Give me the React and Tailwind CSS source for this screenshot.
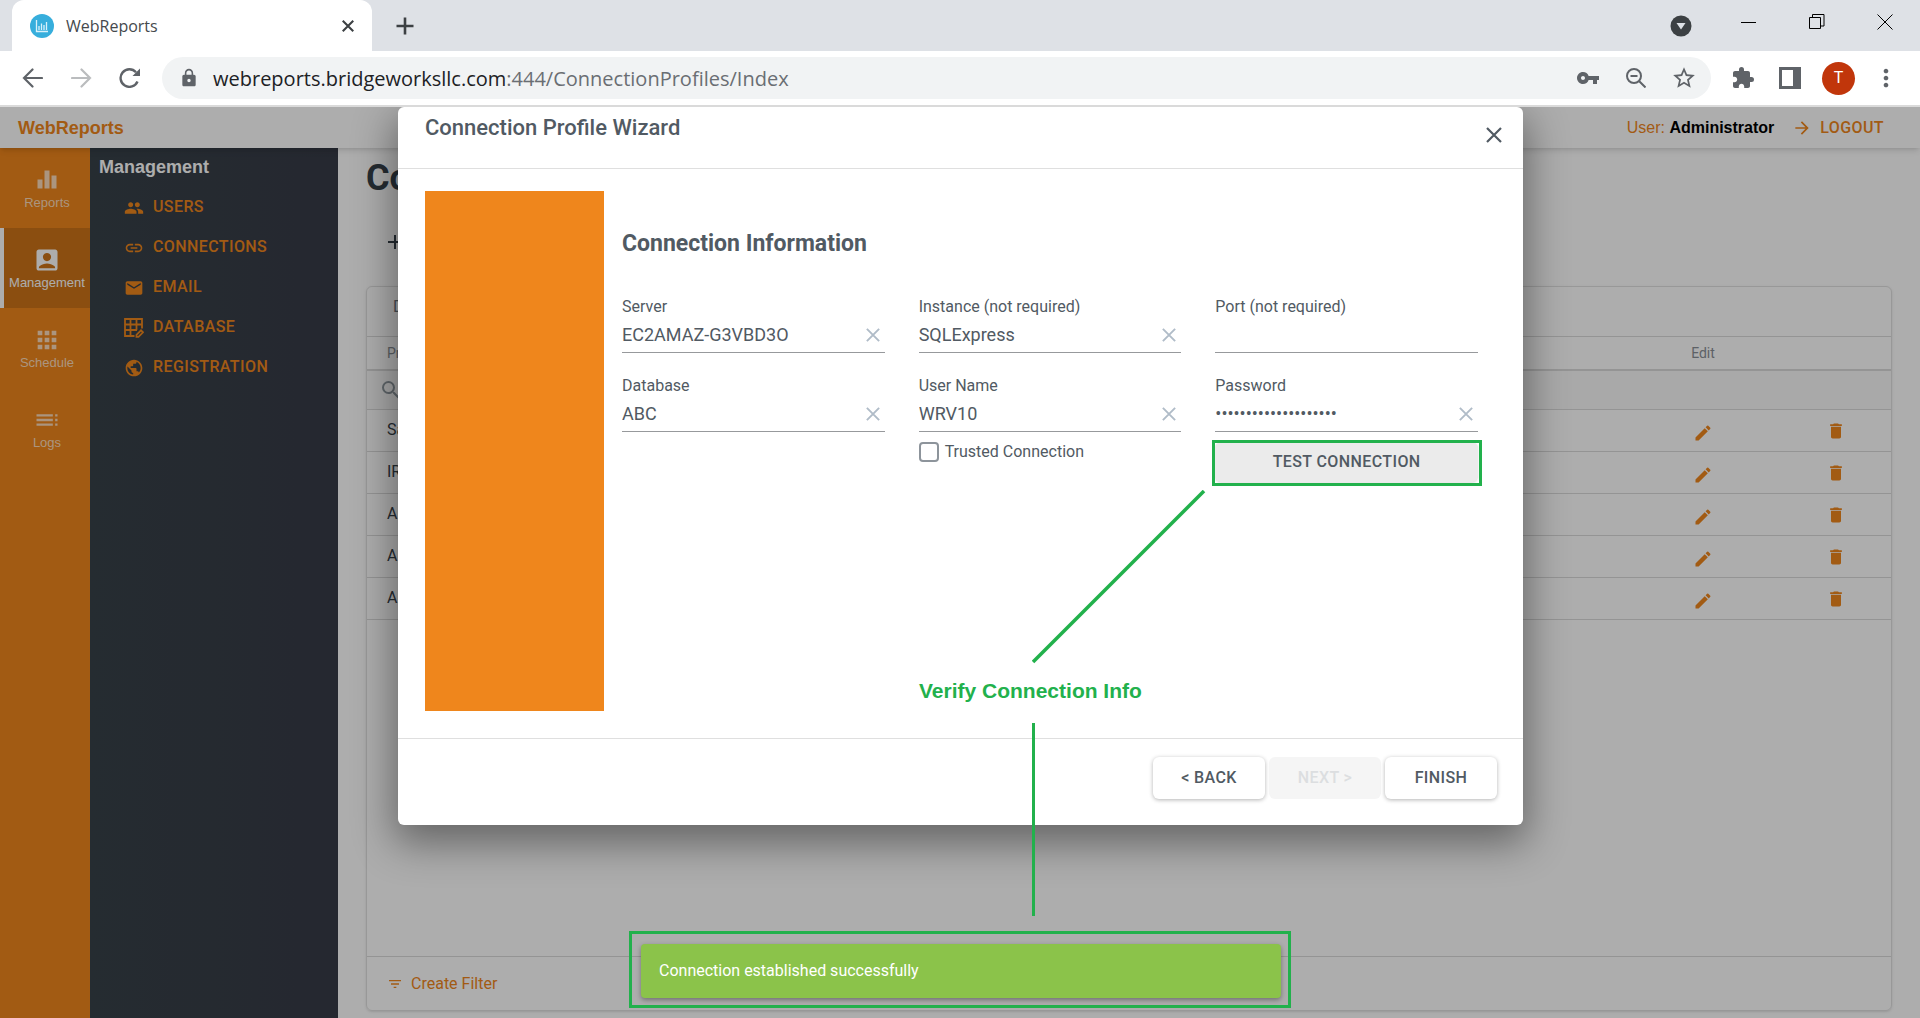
import React from "react";
import {
  MdArrowForward, MdLock, MdVpnKey, MdStarOutline, MdExtension,
  MdMoreVert, MdAdd, MdPeople, MdLink, MdEmail, MdPublic, MdAccountBox, MdApps, MdToc,
  MdSearch, MdEdit, MdDelete, MdFilterList,
} from "react-icons/md";

const RAIL = [
  { label: "Reports", icon: (
    <svg viewBox="0 0 28 28" className="size-7" fill="currentColor"><path d="M11.500 4.500h5v18h-5zM4.500 13.500h5v9h-5zM18.500 9.500h5v13h-5z" /></svg>
  ) },
  { label: "Management", icon: <MdAccountBox className="size-7" />, active: true },
  { label: "Schedule", icon: <MdApps className="size-7" /> },
  { label: "Logs", icon: <MdToc className="size-7" /> },
];

function DatabaseIcon() {
  return (
    <svg viewBox="0 0 20 20" className="size-5" fill="none" stroke="currentColor" strokeWidth="1.800">
      <path d="M10.500 18H1V1h17v9.500M1 6.500h17M1 12h12M6.500 1v17M12.500 1v11" />
      <path d="M12.500 18.800v-2l4.500-4.500 2 2-4.500 4.500z" />
    </svg>
  );
}

function Cross({ className, width }) {
  return (
    <svg viewBox="0 0 16 16" className={className} fill="none" stroke="currentColor" strokeWidth={width}>
      <path d="M1 1l14 14M15 1L1 15" />
    </svg>
  );
}

const MENU = [
  { label: "USERS", icon: <MdPeople className="size-5" /> },
  { label: "CONNECTIONS", icon: <MdLink className="size-5" /> },
  { label: "EMAIL", icon: <MdEmail className="size-5" /> },
  { label: "DATABASE", icon: <DatabaseIcon /> },
  { label: "REGISTRATION", icon: <MdPublic className="size-5" /> },
];

const ROWS = ["Sample", "IRIS", "ABC", "ABC Test", "ABC Dev"];

function Browser() {
  return (
    <header className="shrink-0 font-['Open_Sans','Noto_Sans',sans-serif]">
      <div className="flex h-[51px] items-stretch bg-[#dee1e6] pl-3">
        <div className="flex w-[360px] items-center rounded-t-xl bg-white pr-[18px] pl-[18px]">
          <svg viewBox="0 0 24 24" className="size-6">
            <circle cx="12" cy="12" r="12" fill="#37aedc" />
            <path d="M6.500 6v11.500h11.500M9 16v-4M11.500 16V9.500M14 16v-5M16.500 16V8" fill="none" stroke="#d9f1fa" strokeWidth="1.300" />
          </svg>
          <span className="ml-3 grow text-base text-[#45494d]">WebReports</span>
          <button aria-label="Close tab" className="text-[#3c4043]"><Cross className="size-3" width="2.800" /></button>
        </div>
        <button aria-label="New tab" className="ml-6 text-[#3c4043]">
          <svg viewBox="0 0 18 18" className="size-[18px]" stroke="currentColor" strokeWidth="2.600"><path d="M9 .5v17M.5 9h17" /></svg>
        </button>
        <div className="grow" />
        <button aria-label="Search tabs" className="mr-[49px] text-[#3c4043]">
          <svg viewBox="0 0 22 22" className="size-[22px]"><circle cx="11" cy="11" r="10.500" fill="currentColor" /><path d="M6.500 8h9L11 14.500z" fill="#dee1e6" /></svg>
        </button>
        <div className="flex items-center gap-[52px] pr-[27px] pb-2 text-black">
          <button aria-label="Minimize"><svg viewBox="0 0 16 16" className="size-4" stroke="currentColor"><path d="M0 8.500h15" /></svg></button>
          <button aria-label="Restore"><svg viewBox="0 0 16 16" className="size-4" fill="none" stroke="currentColor"><path d="M.5 3.500h11v11H.5zM3.500 3V.5h11.500v11.500h-3" /></svg></button>
          <button aria-label="Close"><svg viewBox="0 0 16 16" className="size-4" stroke="currentColor"><path d="M.5.5l15 15M15.500.5l-15 15" /></svg></button>
        </div>
      </div>
      <div className="flex h-14 items-center border-b-2 border-[#dadada] bg-white pr-5 pl-[22px] text-[#5f6368]">
        <button aria-label="Back">
          <svg viewBox="0 0 21 20" className="h-5 w-[21px]" fill="none" stroke="currentColor" strokeWidth="2.200" strokeLinecap="round"><path d="M20 10H2M10.500 1.500L2 10l8.500 8.500" /></svg>
        </button>
        <button aria-label="Forward" className="ml-7 text-[#babcbe]">
          <svg viewBox="0 0 21 20" className="h-5 w-[21px]" fill="none" stroke="currentColor" strokeWidth="2.200" strokeLinecap="round"><path d="M1 10h18M10.500 1.500L19 10l-8.500 8.500" /></svg>
        </button>
        <button aria-label="Reload" className="ml-[27px]">
          <svg viewBox="0 0 22 20" className="h-5 w-[22px]" fill="none" stroke="currentColor" strokeWidth="2.400"><path d="M18.500 13.500a8.800 8.800 0 1 1-1.500-9.300" /><path d="M21 .5V8h-7.500z" fill="currentColor" stroke="none" /></svg>
        </button>
        <div className="ml-[21px] flex h-[42px] grow items-center rounded-full bg-[#f1f3f4] pr-[14px] pl-[17px]">
          <MdLock className="size-5" />
          <span className="ml-[14px] grow pt-px text-xl text-[#6a6e73]"><span className="text-[#202124]">webreports.bridgeworksllc.com</span>:444/ConnectionProfiles/Index</span>
          <button aria-label="Passwords"><MdVpnKey className="size-6" /></button>
          <button aria-label="Zoom" className="ml-[26px]">
            <svg viewBox="0 0 20 20" className="size-5" fill="none" stroke="currentColor" strokeWidth="2"><circle cx="8" cy="8" r="7" /><path d="M13 13l6.500 6.500M4.500 8h7" /></svg>
          </button>
          <button aria-label="Bookmark" className="ml-[25px]"><MdStarOutline className="size-[26px]" /></button>
        </div>
        <button aria-label="Extensions" className="ml-5"><MdExtension className="size-6" /></button>
        <button aria-label="Side panel" className="ml-6"><svg viewBox="0 0 22 22" className="size-[22px]"><path d="M0 0h22v22H0zM3 3v16h11V3z" fill="currentColor" fillRule="evenodd" /></svg></button>
        <button aria-label="Profile" className="ml-[21px] size-[33px] rounded-full bg-[#c1360b] font-['Roboto',sans-serif] text-base text-white">T</button>
        <button aria-label="Menu" className="ml-[17px]"><MdMoreVert className="size-7" /></button>
      </div>
    </header>
  );
}

function Field({ id, label, value, type = "text" }) {
  return (
    <div className="flex flex-col">
      <label htmlFor={id} className="text-base leading-5">{label}</label>
      <div className="flex h-9 items-center border-b border-[#97999c]">
        <input id={id} type={type} defaultValue={value} className="w-full min-w-0 grow bg-transparent pt-px text-lg outline-none" />
        {value && <button type="button" aria-label={"Clear " + label} className="pr-[5px] text-[#b0bcc8]"><Cross className="size-[14px]" width="2.200" /></button>}
      </div>
    </div>
  );
}

function Wizard() {
  return (
    <div role="dialog" aria-label="Connection Profile Wizard" className="absolute top-0 left-[398px] flex w-[1125px] flex-col rounded-md bg-white text-[#515a63] shadow-[0_14px_40px_4px_rgba(0,0,0,0.42)]">
      <div className="flex h-[62px] items-start justify-between border-b border-[#dfdfdf] pt-2 pr-[21px] pl-[27px]">
        <h2 className="text-[22px] leading-[26px] font-medium">Connection Profile Wizard</h2>
        <button aria-label="Close" className="mt-3"><Cross className="size-4" width="2.200" /></button>
      </div>
      <div className="flex gap-[18px] px-[27px] pt-[22px] pb-[27px]">
        <div className="w-[179px] bg-[#ef861c]" />
        <form className="h-[520px] grow pt-[41px] pr-[18px]">
          <h3 className="text-[23px] leading-6 font-bold">Connection Information</h3>
          <div className="mt-[41px] grid grid-cols-3 gap-x-[34px] gap-y-[23px]">
            <Field id="server" label="Server" value="EC2AMAZ-G3VBD3O" />
            <Field id="instance" label="Instance (not required)" value="SQLExpress" />
            <Field id="port" label="Port (not required)" value="" />
            <Field id="database" label="Database" value="ABC" />
            <Field id="user" label="User Name" value="WRV10" />
            <Field id="password" label="Password" type="password" value="12345678901234567890" />
          </div>
          <div className="mt-[10px] grid grid-cols-3 gap-x-[34px]">
            <label className="col-start-2 flex items-center gap-[6px] self-start text-base leading-5">
              <input type="checkbox" className="size-5 appearance-none rounded-sm border-2 border-[#8d949b]" />
              Trusted Connection
            </label>
            <button type="button" className="h-10 rounded-md bg-[#ebebeb] text-base font-medium tracking-wide shadow">TEST CONNECTION</button>
          </div>
        </form>
      </div>
      <div className="flex justify-end gap-1 border-t border-[#dfdfdf] pt-[18px] pr-[26px] pb-[26px] text-base font-medium tracking-wide">
        <button className="h-[42px] w-[112px] rounded-md shadow-[0_1px_4px_rgba(0,0,0,0.3)]">&lt; BACK</button>
        <button disabled className="h-[42px] w-[112px] rounded-md bg-[#f5f5f5] text-[#dcdee0]">NEXT &gt;</button>
        <button className="h-[42px] w-[112px] rounded-md shadow-[0_1px_4px_rgba(0,0,0,0.3)]">FINISH</button>
      </div>
    </div>
  );
}

function Annotations() {
  return (
    <>
      <div className="pointer-events-none absolute top-[333px] left-[1212px] h-[46px] w-[270px] border-[3px] border-[#22b14c]" />
      <svg viewBox="0 0 174 174" className="absolute top-[383px] left-[1032px] size-[174px]" stroke="#22b14c" strokeWidth="3.500"><path d="M1 172L172 1" /></svg>
      <p className="absolute top-[572px] left-[919px] font-['Liberation_Sans',sans-serif] text-[21px] leading-6 font-bold whitespace-nowrap text-[#22b14c]">Verify Connection Info</p>
      <div className="absolute top-[616px] left-[1032px] h-[193px] w-[3px] bg-[#22b14c]" />
      <div className="absolute top-[824px] left-[629px] border-[3px] border-[#22b14c] pt-[10px] pr-[7px] pb-[7px] pl-[9px]">
        <div role="status" className="h-[54px] w-[640px] rounded bg-[#8bc34a] px-[18px] text-base leading-[54px] text-white shadow-[0_2px_5px_rgba(0,0,0,0.35)]">Connection established successfully</div>
      </div>
    </>
  );
}

export default function App() {
  return (
    <div className="flex min-h-screen flex-col bg-white font-['Roboto',sans-serif]">
      <Browser />
      <div className="relative flex grow flex-col overflow-hidden">
        <div className="z-10 flex h-[41px] items-center bg-white pr-9 pl-[18px] font-['Liberation_Sans',sans-serif] text-base text-[#ef861c] shadow-md">
          <span className="grow text-lg font-bold">WebReports</span>
          <span>User: <b className="text-black">Administrator</b></span>
          <a href="#" className="ml-[18px] flex items-center gap-2 font-['Roboto',sans-serif] font-medium tracking-wide"><MdArrowForward className="size-5" />LOGOUT</a>
        </div>
        <div className="flex grow">
          <nav className="w-[90px] shrink-0 bg-[#ef861c] font-['Liberation_Sans',sans-serif] text-[13px] leading-[18px]">
            {RAIL.map((r) => (
              <a key={r.label} href="#" className={r.active ? "flex h-20 flex-col items-center border-l-4 border-white bg-[#cd7418] pt-[18px] text-white" : "flex h-20 flex-col items-center border-l-4 border-transparent pt-[18px] text-[#fcdcbc]"}>
                {r.icon}{r.label}
              </a>
            ))}
          </nav>
          <nav className="w-[248px] shrink-0 bg-linear-to-r from-[#374149] to-[#373b47] px-[9px] pt-1">
            <h1 className="mt-[3px] font-['Liberation_Sans',sans-serif] text-lg leading-6 font-bold text-white">Management</h1>
            <ul className="mt-2 text-base font-medium tracking-wide text-[#ef861c]">
              {MENU.map((m) => (
                <li key={m.label}><a href="#" className="flex h-10 items-center pl-[25px]"><span className="flex w-[29px] justify-start pt-px">{m.icon}</span>{m.label}</a></li>
              ))}
            </ul>
          </nav>
          <main className="flex min-w-0 grow flex-col bg-white pt-2 pr-[28px] pb-[7px] pl-[28px] text-[#37414b]">
            <h1 className="text-4xl leading-[44px] font-bold">Connection Profiles</h1>
            <button aria-label="Add" className="mt-[30px] ml-[17px] self-start"><MdAdd className="size-6" /></button>
            <section className="mt-8 flex grow flex-col rounded-md border border-[#e0e0e0] shadow">
              <div className="h-[49px] pt-2 pl-[26px] text-base text-[#6c757d]">Drag a column header here</div>
              <table className="w-full table-fixed border-t border-[#dadada] text-base">
                <thead>
                  <tr className="h-[33px] border-b-2 border-[#dadada] text-sm text-[#8a9097]">
                    <th className="pl-5 text-left font-normal">Profile</th>
                    <th className="w-[156px] font-normal">Edit</th>
                    <th className="w-[110px]" />
                  </tr>
                  <tr className="h-10 border-b border-[#dadada] bg-[#fafafa]">
                    <td className="pl-3"><MdSearch className="size-6 text-[#8f999f]" /></td><td /><td />
                  </tr>
                </thead>
                <tbody>
                  {ROWS.map((r) => (
                    <tr key={r} className="h-[42px] border-b border-[#dadada]">
                      <td className="pb-px pl-5">{r}</td>
                      <td><button aria-label={"Edit " + r} className="mx-auto block pt-1 text-[#ef861c]"><MdEdit className="size-5" /></button></td>
                      <td><button aria-label={"Delete " + r} className="mx-auto block text-[#ef861c]"><MdDelete className="size-5" /></button></td>
                    </tr>
                  ))}
                </tbody>
              </table>
              <button className="mt-auto flex h-[54px] items-center gap-2 border-t border-[#dadada] pl-5 text-base text-[#ef861c]"><MdFilterList className="size-4" />Create Filter</button>
            </section>
          </main>
        </div>
        <div className="absolute inset-0 z-20 bg-black/32">
          <Wizard />
          <Annotations />
        </div>
      </div>
    </div>
  );
}
